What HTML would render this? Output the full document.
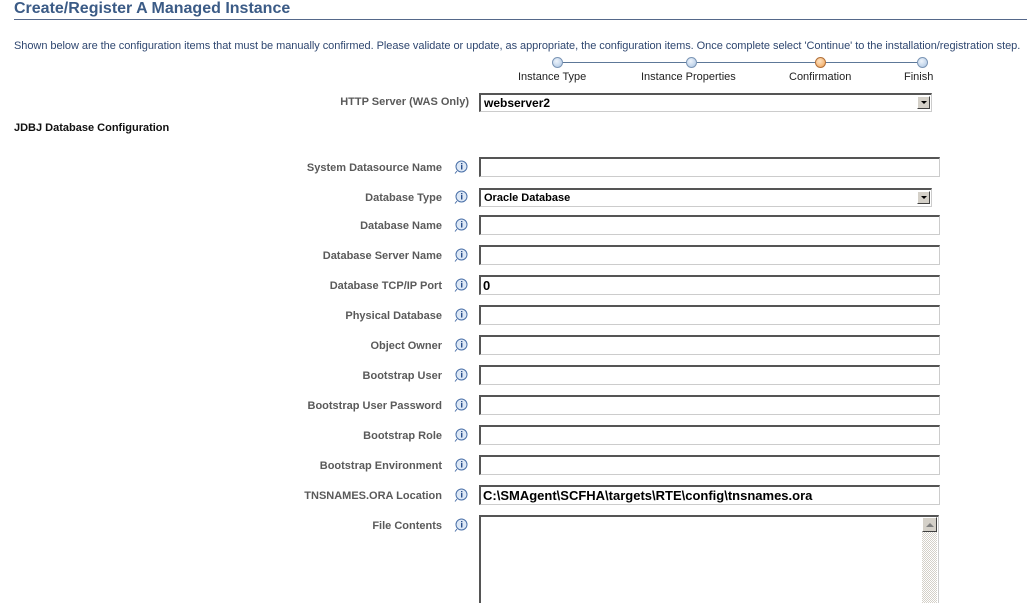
<!DOCTYPE html>
<html><head><meta charset="utf-8"><style>
html,body{margin:0;width:1027px;height:603px;overflow:hidden}
body{background:#fff;font-family:"Liberation Sans",sans-serif;position:relative}
.a{position:absolute;white-space:nowrap}
.lbl{position:absolute;right:585px;font-size:11px;font-weight:bold;color:#5a5a5a}
.inp{position:absolute;left:479px;width:456px;height:17px;border-top:2px solid #555;border-left:2px solid #555;border-bottom:1px solid #ccc;border-right:1px solid #ccc;background:#fff;font-size:13px;font-weight:bold;line-height:17px;padding-left:2px;box-sizing:content-box}
.ic{position:absolute;left:454px;width:14px;height:14px}
.sel{position:absolute;left:479px;width:447px;height:16px;border-top:2px solid #555;border-left:2px solid #555;border-bottom:1px solid #ccc;border-right:1px solid #ccc;font-size:11px;font-weight:bold;line-height:16px;padding-left:3px;background:#fff}
.arr{position:absolute;right:1px;top:1px;width:13px;height:13px;background:#d4d0c8;border:1px solid;border-color:#fff #404040 #404040 #fff;box-sizing:border-box}
.arr:after{content:"";position:absolute;left:3px;top:4px;border-left:3px solid transparent;border-right:3px solid transparent;border-top:3px solid #000}
.step{position:absolute;top:57px;width:11px;height:11px;border-radius:50%;border:1px solid #7b95b5;background:radial-gradient(circle at 40% 35%,#eef4fb,#aac4e2);box-sizing:border-box}
.sl{position:absolute;top:71px;font-size:11px;color:#222}
</style></head><body>
<div class="a" style="left:14px;top:0;font-size:16px;font-weight:bold;color:#3b5b86">Create/Register A Managed Instance</div>
<div class="a" style="left:14px;top:19px;width:1013px;height:1px;background:#55688a"></div>
<div class="a" style="left:14px;top:40px;font-size:11px;color:#2f4770;letter-spacing:-0.05px">Shown below are the configuration items that must be manually confirmed. Please validate or update, as appropriate, the configuration items. Once complete select 'Continue' to the installation/registration step.</div>
<div class="a" style="left:557px;top:62px;width:365px;height:1px;background:#5d7898"></div>
<div class="step" style="left:552px"></div>
<div class="step" style="left:686px"></div>
<div class="step" style="left:815px;border-color:#b0703a;background:radial-gradient(circle at 40% 35%,#fde3c4,#f0a050)"></div>
<div class="step" style="left:917px"></div>
<div class="sl" style="left:518px">Instance Type</div>
<div class="sl" style="left:641px">Instance Properties</div>
<div class="sl" style="left:789px">Confirmation</div>
<div class="sl" style="left:904px">Finish</div>
<div class="lbl" style="top:96px;right:558px">HTTP Server (WAS Only)</div>
<div class="sel" style="top:93px;font-size:12px">webserver2<span class="arr"></span></div>
<div class="a" style="left:14px;top:122px;font-size:11px;font-weight:bold;color:#111">JDBJ Database Configuration</div>

<div class="lbl" style="top:162px">System Datasource Name</div><svg class="ic" style="top:160px" viewBox="0 0 14 14"><circle cx="7.5" cy="6.5" r="5.5" fill="#dde8f6" stroke="#4a70a8"/><path d="M3 11 L1 13.5" stroke="#4a70a8"/><rect x="7" y="5" width="1.4" height="4.5" fill="#2a4f8a"/><rect x="7" y="3" width="1.4" height="1.3" fill="#2a4f8a"/></svg><div class="inp" style="top:157px"></div>
<div class="lbl" style="top:192px">Database Type</div><svg class="ic" style="top:190px" viewBox="0 0 14 14"><circle cx="7.5" cy="6.5" r="5.5" fill="#dde8f6" stroke="#4a70a8"/><path d="M3 11 L1 13.5" stroke="#4a70a8"/><rect x="7" y="5" width="1.4" height="4.5" fill="#2a4f8a"/><rect x="7" y="3" width="1.4" height="1.3" fill="#2a4f8a"/></svg><div class="sel" style="top:188px">Oracle Database<span class="arr"></span></div>
<div class="lbl" style="top:220px">Database Name</div><svg class="ic" style="top:218px" viewBox="0 0 14 14"><circle cx="7.5" cy="6.5" r="5.5" fill="#dde8f6" stroke="#4a70a8"/><path d="M3 11 L1 13.5" stroke="#4a70a8"/><rect x="7" y="5" width="1.4" height="4.5" fill="#2a4f8a"/><rect x="7" y="3" width="1.4" height="1.3" fill="#2a4f8a"/></svg><div class="inp" style="top:215px"></div>
<div class="lbl" style="top:250px">Database Server Name</div><svg class="ic" style="top:248px" viewBox="0 0 14 14"><circle cx="7.5" cy="6.5" r="5.5" fill="#dde8f6" stroke="#4a70a8"/><path d="M3 11 L1 13.5" stroke="#4a70a8"/><rect x="7" y="5" width="1.4" height="4.5" fill="#2a4f8a"/><rect x="7" y="3" width="1.4" height="1.3" fill="#2a4f8a"/></svg><div class="inp" style="top:245px"></div>
<div class="lbl" style="top:280px">Database TCP/IP Port</div><svg class="ic" style="top:278px" viewBox="0 0 14 14"><circle cx="7.5" cy="6.5" r="5.5" fill="#dde8f6" stroke="#4a70a8"/><path d="M3 11 L1 13.5" stroke="#4a70a8"/><rect x="7" y="5" width="1.4" height="4.5" fill="#2a4f8a"/><rect x="7" y="3" width="1.4" height="1.3" fill="#2a4f8a"/></svg><div class="inp" style="top:275px">0</div>
<div class="lbl" style="top:310px">Physical Database</div><svg class="ic" style="top:308px" viewBox="0 0 14 14"><circle cx="7.5" cy="6.5" r="5.5" fill="#dde8f6" stroke="#4a70a8"/><path d="M3 11 L1 13.5" stroke="#4a70a8"/><rect x="7" y="5" width="1.4" height="4.5" fill="#2a4f8a"/><rect x="7" y="3" width="1.4" height="1.3" fill="#2a4f8a"/></svg><div class="inp" style="top:305px"></div>
<div class="lbl" style="top:340px">Object Owner</div><svg class="ic" style="top:338px" viewBox="0 0 14 14"><circle cx="7.5" cy="6.5" r="5.5" fill="#dde8f6" stroke="#4a70a8"/><path d="M3 11 L1 13.5" stroke="#4a70a8"/><rect x="7" y="5" width="1.4" height="4.5" fill="#2a4f8a"/><rect x="7" y="3" width="1.4" height="1.3" fill="#2a4f8a"/></svg><div class="inp" style="top:335px"></div>
<div class="lbl" style="top:370px">Bootstrap User</div><svg class="ic" style="top:368px" viewBox="0 0 14 14"><circle cx="7.5" cy="6.5" r="5.5" fill="#dde8f6" stroke="#4a70a8"/><path d="M3 11 L1 13.5" stroke="#4a70a8"/><rect x="7" y="5" width="1.4" height="4.5" fill="#2a4f8a"/><rect x="7" y="3" width="1.4" height="1.3" fill="#2a4f8a"/></svg><div class="inp" style="top:365px"></div>
<div class="lbl" style="top:400px">Bootstrap User Password</div><svg class="ic" style="top:398px" viewBox="0 0 14 14"><circle cx="7.5" cy="6.5" r="5.5" fill="#dde8f6" stroke="#4a70a8"/><path d="M3 11 L1 13.5" stroke="#4a70a8"/><rect x="7" y="5" width="1.4" height="4.5" fill="#2a4f8a"/><rect x="7" y="3" width="1.4" height="1.3" fill="#2a4f8a"/></svg><div class="inp" style="top:395px"></div>
<div class="lbl" style="top:430px">Bootstrap Role</div><svg class="ic" style="top:428px" viewBox="0 0 14 14"><circle cx="7.5" cy="6.5" r="5.5" fill="#dde8f6" stroke="#4a70a8"/><path d="M3 11 L1 13.5" stroke="#4a70a8"/><rect x="7" y="5" width="1.4" height="4.5" fill="#2a4f8a"/><rect x="7" y="3" width="1.4" height="1.3" fill="#2a4f8a"/></svg><div class="inp" style="top:425px"></div>
<div class="lbl" style="top:460px">Bootstrap Environment</div><svg class="ic" style="top:458px" viewBox="0 0 14 14"><circle cx="7.5" cy="6.5" r="5.5" fill="#dde8f6" stroke="#4a70a8"/><path d="M3 11 L1 13.5" stroke="#4a70a8"/><rect x="7" y="5" width="1.4" height="4.5" fill="#2a4f8a"/><rect x="7" y="3" width="1.4" height="1.3" fill="#2a4f8a"/></svg><div class="inp" style="top:455px"></div>
<div class="lbl" style="top:490px">TNSNAMES.ORA Location</div><svg class="ic" style="top:488px" viewBox="0 0 14 14"><circle cx="7.5" cy="6.5" r="5.5" fill="#dde8f6" stroke="#4a70a8"/><path d="M3 11 L1 13.5" stroke="#4a70a8"/><rect x="7" y="5" width="1.4" height="4.5" fill="#2a4f8a"/><rect x="7" y="3" width="1.4" height="1.3" fill="#2a4f8a"/></svg><div class="inp" style="top:485px">C:\SMAgent\SCFHA\targets\RTE\config\tnsnames.ora</div>
<div class="lbl" style="top:520px">File Contents</div><svg class="ic" style="top:518px" viewBox="0 0 14 14"><circle cx="7.5" cy="6.5" r="5.5" fill="#dde8f6" stroke="#4a70a8"/><path d="M3 11 L1 13.5" stroke="#4a70a8"/><rect x="7" y="5" width="1.4" height="4.5" fill="#2a4f8a"/><rect x="7" y="3" width="1.4" height="1.3" fill="#2a4f8a"/></svg>
<div class="a" style="left:479px;top:515px;width:457px;height:88px;border-top:2px solid #555;border-left:2px solid #555;border-right:1px solid #ccc;background:#fff;box-sizing:content-box"></div>
<div class="a" style="left:922px;top:517px;width:15px;height:86px;background:repeating-conic-gradient(#d4d0c8 0 25%,#fff 0 50%) 0 0/2px 2px"></div>
<div class="a" style="left:922px;top:517px;width:15px;height:15px;background:#d4d0c8;border:1px solid;border-color:#fff #404040 #404040 #fff;box-sizing:border-box"><div style="position:absolute;left:3px;top:5px;border-left:4px solid transparent;border-right:4px solid transparent;border-bottom:4px solid #808080"></div></div>
</body></html>
